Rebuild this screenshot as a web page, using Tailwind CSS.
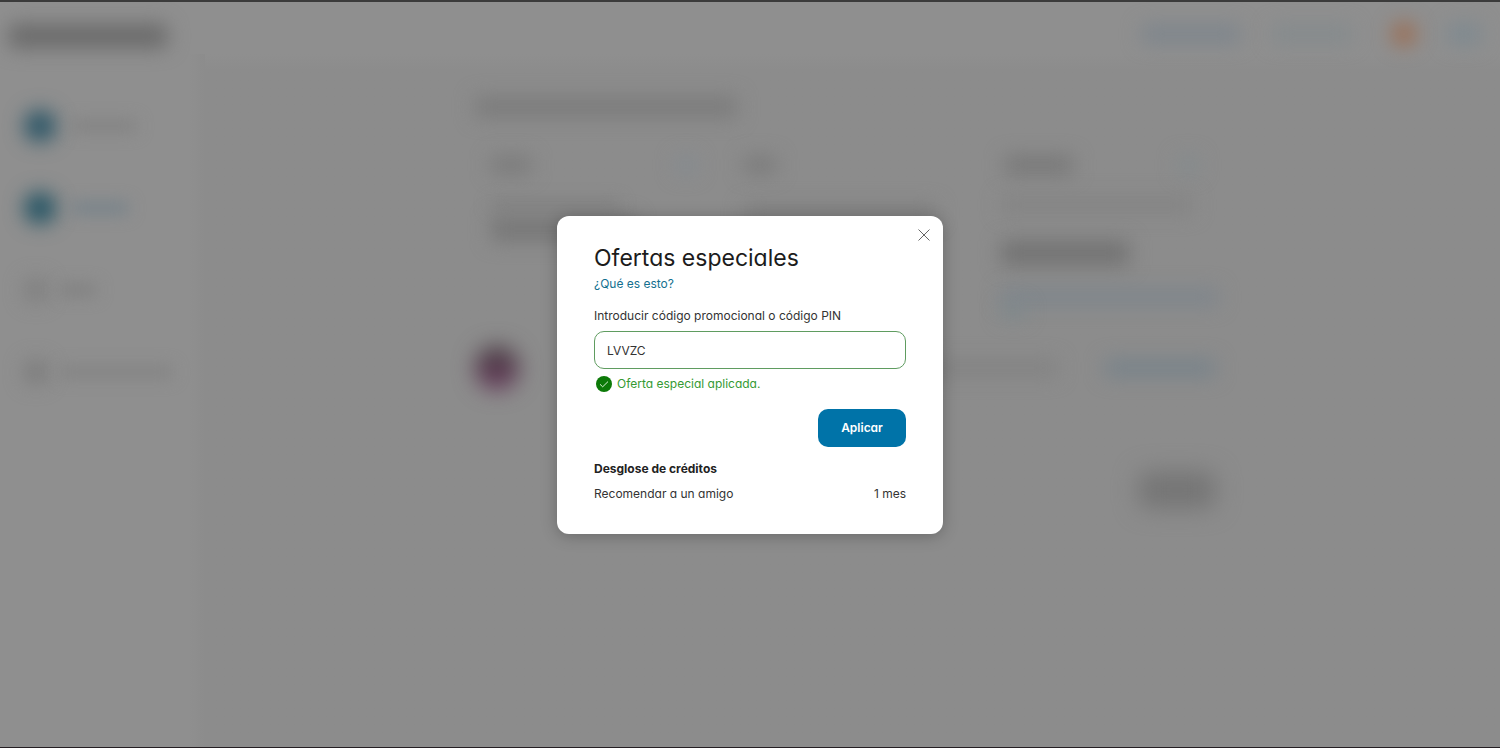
<!DOCTYPE html>
<html lang="es">
<head>
<meta charset="utf-8">
<meta name="viewport" content="width=device-width, initial-scale=1">
<title>Ofertas especiales</title>
<script src="https://cdn.jsdelivr.net/npm/@tailwindcss/browser@4"></script>
</head>
<body class="font-['Inter','Liberation_Sans',sans-serif] [font-feature-settings:'cv11'] text-[#333]">
<div class="relative min-h-screen flex flex-col overflow-hidden border-t-2 border-t-[#3b3b3b] border-b border-b-[#251f23] bg-[#8f8f8f]">

  <!-- Page behind the dialog, out of focus -->
  <div class="flex flex-1 flex-col" aria-hidden="true">
    <div class="flex h-[52px] items-center pl-2 pr-5">
      <div class="mt-4 h-6 w-[160px] rounded-lg bg-[#6a6a6a] blur-[10px]"></div>
      <div class="ml-auto mt-3 flex items-center gap-8">
        <div class="h-4 w-[98px] bg-[#7b848c] blur-[10px]"></div>
        <div class="h-4 w-[80px] bg-[#838a8d] blur-[10px]"></div>
        <div class="ml-2 size-6 rounded-full bg-[#9d6c50] blur-[10px]"></div>
        <div class="h-5 w-8 bg-[#7d8990] blur-[10px]"></div>
      </div>
    </div>
    <div class="flex flex-1">
      <div class="flex w-[189px] shrink-0 flex-col gap-[46px] pl-6 pt-[54px]">
        <div class="flex h-9 items-center gap-4">
          <div class="size-8 rounded-full bg-[#2c5667] blur-[10px]"></div>
          <div class="h-3 w-16 bg-[#828282] blur-[8px]"></div>
        </div>
        <div class="flex h-9 items-center gap-4">
          <div class="size-8 rounded-full bg-[#245464] blur-[10px]"></div>
          <div class="h-3 w-14 bg-[#76828a] blur-[8px]"></div>
        </div>
        <div class="flex h-9 items-center gap-3">
          <div class="size-6 rounded-full bg-[#7e7e7e] blur-[10px]"></div>
          <div class="h-3 w-9 bg-[#808080] blur-[8px]"></div>
        </div>
        <div class="flex h-9 items-center gap-3">
          <div class="size-6 rounded-full bg-[#7a7a7a] blur-[10px]"></div>
          <div class="h-3 w-28 bg-[#838383] blur-[8px]"></div>
        </div>
      </div>
      <div class="w-4 shrink-0 bg-linear-to-r from-[#8f8f8f] to-[#8c8c8c]"></div>
      <div class="flex-1 bg-linear-to-b from-[#8f8f8f] to-[#8c8c8c] to-[16px] pr-3">
        <div class="mx-auto max-w-[776px] px-4 pt-[43px]">
          <div class="h-5 w-[262px] bg-[#7b7b7b] blur-[10px]"></div>
          <div class="mt-7 grid h-[195px] grid-cols-3 gap-4">
            <div class="flex flex-col px-4 pt-3">
              <div class="flex justify-between">
                <div class="h-4 w-10 bg-[#797979] blur-[10px]"></div>
                <div class="h-4 w-5 bg-[#848b91] blur-[10px]"></div>
              </div>
              <div class="mt-7 h-2 w-32 bg-[#7d7d7d] blur-[8px]"></div>
              <div class="mt-2 h-6 w-36 bg-[#777] blur-[10px]"></div>
            </div>
            <div class="flex flex-col px-4 pt-3">
              <div class="h-4 w-8 bg-[#797979] blur-[10px]"></div>
              <div class="mt-8 h-4 w-48 bg-[#7e7e7e] blur-[10px]"></div>
            </div>
            <div class="flex flex-col pl-5 pt-3">
              <div class="mr-5 flex justify-between">
                <div class="ml-1 h-4 w-[68px] bg-[#757575] blur-[10px]"></div>
                <div class="h-4 w-5 bg-[#838b8e] blur-[10px]"></div>
              </div>
              <div class="mt-6 h-4 w-48 bg-[#838383] blur-[10px]"></div>
              <div class="mt-7 h-6 w-32 bg-[#727272] blur-[10px]"></div>
              <div class="mt-6 h-4 bg-[#7d858c] blur-[10px]"></div>
              <div class="h-3 w-6 bg-[#7b888c] blur-[10px]"></div>
            </div>
          </div>
          <div class="mt-2 flex h-10 items-center">
            <div class="size-11 shrink-0 rounded-full bg-linear-to-b from-[#453b40] to-[#6a3a5e] blur-[11px]"></div>
            <div class="ml-auto h-4 w-[125px] bg-[#828282] blur-[10px]"></div>
            <div class="ml-12 mr-1 h-4 w-[110px] bg-[#76828a] blur-[10px]"></div>
          </div>
          <div class="mr-1 mt-[84px] ml-auto h-9 w-[76px] rounded-lg bg-[#747474] blur-[12px]"></div>
        </div>
      </div>
    </div>
  </div>

  <!-- Dialog -->
  <div class="absolute inset-0 flex items-center justify-center pt-px">
    <div role="dialog" aria-modal="true" aria-labelledby="title" class="relative w-[386px] rounded-xl bg-white px-[37px] pb-8 pt-[26px] text-xs leading-4 shadow-[0_2px_16px_rgba(0,0,0,0.25)]">
      <button type="button" aria-label="Cerrar" class="absolute right-3 top-3 flex size-[14px] items-center justify-center text-[#666]">
        <svg class="size-[14px]" viewBox="0 0 14 14" fill="none" stroke="currentColor" stroke-width="1"><path d="M1.500 1.500l11 11M12.500 1.500l-11 11"/></svg>
      </button>
      <h1 id="title" class="text-[23px] leading-8 text-[#1c1c1c]">Ofertas especiales</h1>
      <a href="#" class="mt-[2px] block w-fit text-[#14708f]">¿Qué es esto?</a>
      <label for="code" class="mt-4 block">Introducir código promocional o código PIN</label>
      <input id="code" type="text" value="LVVZC" class="mt-[7px] block h-[38px] w-full rounded-[10px] border border-[#5f9c60] px-3 text-[#333] outline-none">
      <p class="mt-[7px] flex items-center gap-[5px] pl-[2px] text-[#349a32]">
        <svg class="size-4" viewBox="0 0 16 16" fill="none"><circle cx="8" cy="8" r="8" fill="#0c7a08"/><path d="M4 8.300l2.700 2.500L12 5.600" stroke="#d9f2d5"/></svg>
        Oferta especial aplicada.
      </p>
      <button type="button" class="ml-auto mt-[17px] block h-[38px] w-[88px] rounded-[10px] bg-[#0073a8] font-semibold text-white">Aplicar</button>
      <h2 class="mt-[14px] font-bold text-[#222]">Desglose de créditos</h2>
      <div class="mt-[9px] flex justify-between"><span>Recomendar a un amigo</span><span>1 mes</span></div>
    </div>
  </div>
</div>
</body>
</html>
